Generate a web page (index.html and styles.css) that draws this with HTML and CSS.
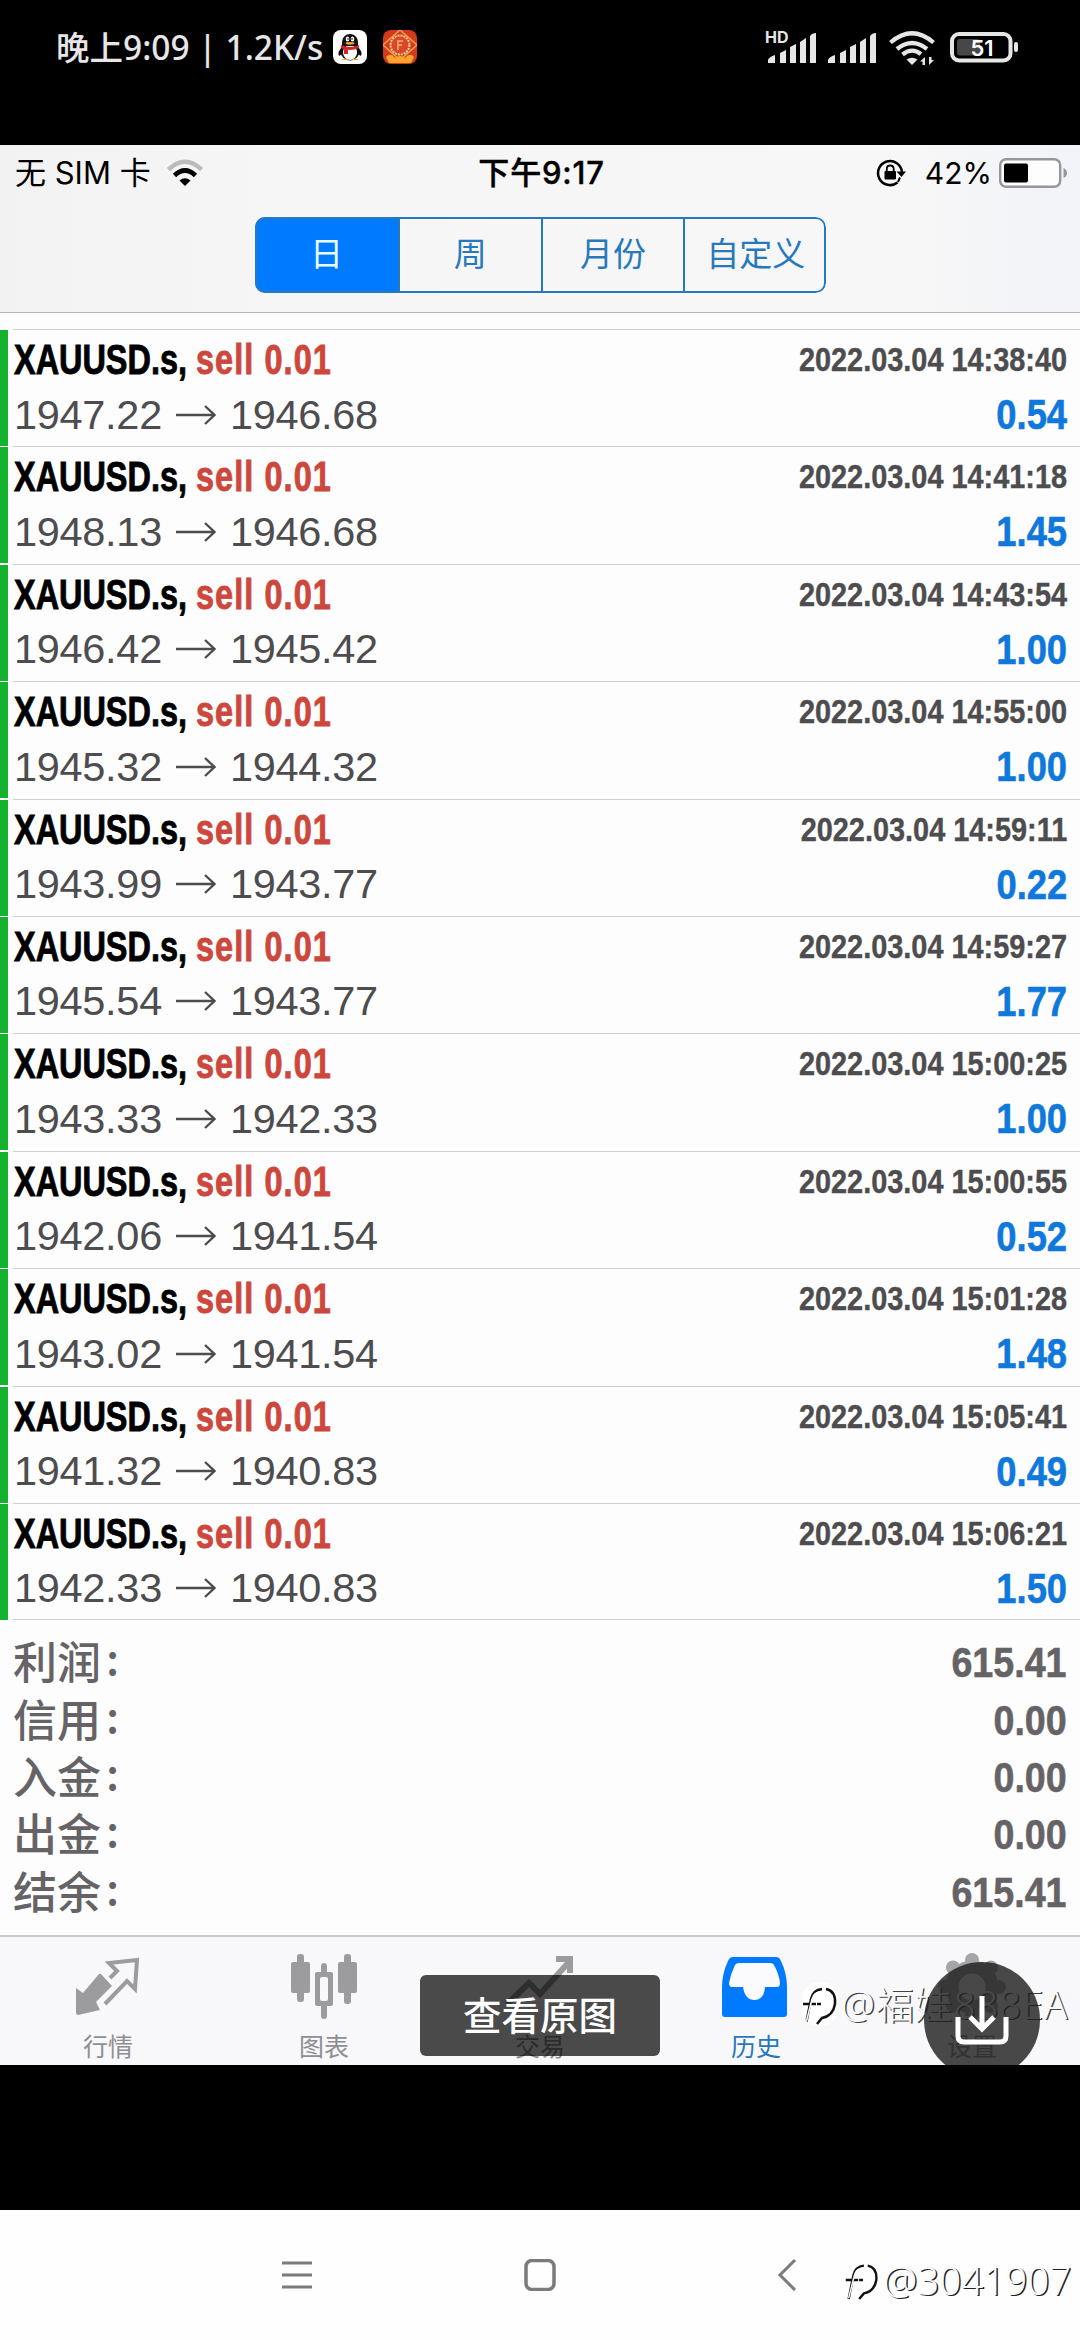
FILE: index.html
```html
<!DOCTYPE html>
<html lang="zh-CN">
<head>
<meta charset="utf-8">
<title>历史</title>
<link rel="stylesheet" href="styles.css">
</head>
<body>
<div class="android-bar">
  <div class="android-left">
    <span class="android-time">晚上9:09 | 1.2K/s</span>
    <svg class="qq" width="34" height="34" viewBox="0 0 34 34">
      <rect width="34" height="34" rx="8" fill="#fff"/>
      <path d="M9 17Q4 22 6 26Q8 25 10 22zM25 17Q30 22 28 26Q26 25 24 22z" fill="#111"/>
      <ellipse cx="17" cy="21" rx="9.5" ry="9.5" fill="#111"/>
      <ellipse cx="17" cy="22.5" rx="7" ry="7.5" fill="#fff"/>
      <path d="M9 13C9 1 25 1 25 13V16H9z" fill="#111"/>
      <ellipse cx="14.5" cy="9" rx="1.8" ry="2.5" fill="#fff"/><ellipse cx="19.5" cy="9" rx="1.8" ry="2.5" fill="#fff"/>
      <circle cx="15" cy="9" r=".8"/><circle cx="19" cy="9" r=".8"/>
      <ellipse cx="17" cy="13.3" rx="4.5" ry="1.4" fill="#f5a623"/>
      <path d="M8 15Q17 19 26 15V18Q17 22 8 18zM11 19L15 20V24H11z" fill="#d8232a"/>
      <path d="M8 30Q12 27 16 30zM18 30Q22 27 26 30z" fill="#f5a623"/>
    </svg>
    <svg class="mahjong" width="34" height="34" viewBox="0 0 34 34">
      <rect width="34" height="34" rx="8" fill="#d43a1c"/>
      <path d="M17 0L34 15L17 30L0 15z" fill="none" stroke="#f3a04c" stroke-width="1.5"/>
      <path d="M3 27Q8 22 12 28Q17 24 22 28Q27 22 31 27L28 33H6z" fill="#f7a52b"/>
      <circle cx="17" cy="15" r="9.5" fill="#d9482a" stroke="#ffd79a" stroke-width="2" stroke-dasharray="2 1"/>
      <path d="M15 20V11H20M15 15H19" fill="none" stroke="#f3b25e" stroke-width="1.5"/>
    </svg>
  </div>
  <svg class="android-icons" width="256" height="40" viewBox="764 28 256 40">
    <text x="764" y="43" class="hd">HD</text>
    <g fill="#e6e6e6">
      <path id="b" d="M767 63V60Q768 57 774 55V63zM779 53L785 50V63H779zM789 47L795 44V63H789zM799 42L805 38V63H799zM809 36Q811 33 815 33V63H809z"/>
      <use href="#b" x="60"/>
      <path d="M911 65L905.500 59.500Q911 56 916.500 59.500z"/>
      <path d="M919 61.500L924 57V65H921.500V61.500zM933 60L928 65V57H930.500V60z"/>
    </g>
    <g fill="none" stroke="#e6e6e6" stroke-width="4.200">
      <path d="M889.500 42.500Q911 24 932.500 42.500M896 49Q911 37 926 49M901.500 54.500Q911 47 920 54"/>
    </g>
    <rect x="951" y="34" width="58.500" height="26.500" rx="7" fill="none" stroke="#e6e6e6" stroke-width="4"/>
    <rect x="956" y="39" width="23" height="16.500" rx="3" fill="#474747"/>
    <rect x="1013" y="42" width="4" height="10" rx="2" fill="#e6e6e6"/>
    <text x="981" y="56" text-anchor="middle" class="pct">51</text>
  </svg>
</div>

<header class="header">
  <div class="ios-bar">
    <div class="ios-left">
      <span>无 SIM 卡</span>
      <svg width="36" height="28" viewBox="0 0 36 28">
        <path d="M1.500 10.500Q18-5 34.500 10.500" fill="none" stroke="#bcbcbc" stroke-width="4.500"/>
        <path d="M7.500 16.500Q18 6.500 28.500 16.500" fill="none" stroke="#000" stroke-width="4.800"/>
        <path d="M18 27L12.500 21.500Q18 17 23.500 21.500z"/>
      </svg>
    </div>
    <div class="ios-time">下午9:17</div>
    <div class="ios-right">
      <svg width="30" height="28" viewBox="0 0 30 28">
        <path d="M26 13A12 12 0 1 0 21.500 23.500" fill="none" stroke="#000" stroke-width="2.500"/>
        <path d="M20.500 12.500H30L25.500 18z"/>
        <path d="M24 18.500L22 23" stroke="#000" stroke-width="2"/>
        <rect x="8.500" y="12" width="11.500" height="8.500" rx="1"/>
        <path d="M10.800 13V10Q10.800 6.500 14.200 6.500T17.700 10V13" fill="none" stroke="#000" stroke-width="1.800"/>
      </svg>
      <span class="ios-pct">42%</span>
      <svg width="69" height="30" viewBox="0 0 69 30">
        <rect x="1.200" y="1.200" width="60" height="27.600" rx="6" fill="#fdfdfe" stroke="#96969b" stroke-width="2.400"/>
        <rect x="5" y="5.500" width="24" height="19" rx="2"/>
        <path d="M64.500 10Q68 11.500 68 15T64.500 20z" fill="#96969b"/>
      </svg>
    </div>
  </div>
  <nav class="segments">
    <span class="segment on">日</span><span class="segment">周</span><span class="segment">月份</span><span class="segment">自定义</span>
  </nav>
</header>

<main class="history">
  <div class="deals" id="deals"></div>
  <div class="summary">
    <div class="total"><span class="label">利润<i>:</i></span><b>615.41</b></div>
    <div class="total"><span class="label">信用<i>:</i></span><b>0.00</b></div>
    <div class="total"><span class="label">入金<i>:</i></span><b>0.00</b></div>
    <div class="total"><span class="label">出金<i>:</i></span><b>0.00</b></div>
    <div class="total"><span class="label">结余<i>:</i></span><b>615.41</b></div>
  </div>
</main>

<footer class="tabs">
  <div class="tab">
    <svg width="76" height="76" viewBox="0 0 76 76">
      <path d="M6 33L13 38L29 19L31 19L42 31L26 47L30 55L8 60Q6 60 6 57z" fill="#9c9b9e"/>
      <path d="M40 23L47 16L39 8L67 5L65 34L57 26L35 49" fill="none" stroke="#9c9b9e" stroke-width="4"/>
    </svg>
    <span>行情</span>
  </div>
  <div class="tab">
    <svg width="76" height="76" viewBox="0 0 76 76">
      <g fill="#9c9b9e">
        <rect x="5" y="7" width="19" height="31" rx="2"/><rect x="11" y="-1" width="7" height="48" rx="3"/>
        <rect x="52" y="7" width="19" height="31" rx="2"/><rect x="58" y="-1" width="7" height="50" rx="3"/>
        <rect x="29" y="17" width="18" height="34" rx="2"/><rect x="35" y="8" width="6" height="56" rx="3"/>
      </g>
      <rect x="34" y="22" width="8" height="24" rx="2" fill="#f8f7f9"/>
    </svg>
    <span>图表</span>
  </div>
  <div class="tab">
    <svg width="76" height="76" viewBox="0 0 76 76">
      <path d="M5 49L27 28L38 39L67 7M54 4H68V18" fill="none" stroke="#9c9b9e" stroke-width="6"/>
    </svg>
    <span>交易</span>
  </div>
  <div class="tab active">
    <svg width="76" height="76" viewBox="0 0 76 76">
      <path d="M18 2H58Q61 2 62.500 5Q69 18 69 33V59Q69 62 66 62H7Q4 62 4 59V33Q4 18 10.500 5Q12 2 15 2z" fill="#007aff"/>
      <path d="M21 8H52Q55 8 56 10Q61 19 62 28Q62 32 59 32H47Q46 45 36.500 45T25 32H14Q11 32 11 28Q13 18 17 10Q18 8 21 8z" fill="#fbfafc"/>
    </svg>
    <span>历史</span>
  </div>
  <div class="tab">
    <svg width="76" height="76" viewBox="0 0 76 76">
      <circle cx="38" cy="32" r="20" fill="none" stroke="#a5a4a7" stroke-width="13"/>
      <g fill="#a5a4a7"><circle cx="38" cy="5" r="7"/><circle cx="19" cy="12.500" r="7"/><circle cx="57" cy="12.500" r="7"/><circle cx="65" cy="32" r="7"/><circle cx="11" cy="32" r="7"/><circle cx="57" cy="51" r="7"/><circle cx="19" cy="51" r="7"/><circle cx="38" cy="59" r="7"/></g>
    </svg>
    <span>设置</span>
  </div>
  <div class="watermark top"><svg class="badge" width="36" height="44" viewBox="0 0 36 44"><use href="#logo"/></svg><span>@福娃888EA</span></div>
  <div class="toast">查看原图</div>
  <svg class="download" width="116" height="103" viewBox="0 0 116 103">
    <circle cx="58" cy="58" r="58" fill="#1c1c1c" fill-opacity=".8"/>
    <path d="M58 34V66M46 55L58 67L70 55" fill="none" stroke="#fff" stroke-width="5"/>
    <path d="M34 55V74Q34 80 40 80H76Q82 80 82 74V55" fill="none" stroke="#fff" stroke-width="5"/>
  </svg>
</footer>

<div class="gap"></div>
<div class="android-nav">
  <svg width="32" height="30" viewBox="0 0 32 30"><path d="M1 3H31M1 15H31M1 27H31" stroke="#7b7b7b" stroke-width="3"/></svg>
  <svg class="home" width="32" height="32" viewBox="0 0 32 32"><rect x="2" y="1.500" width="28" height="29" rx="6" fill="none" stroke="#7b7b7b" stroke-width="3.500"/></svg>
  <svg class="back" width="20" height="32" viewBox="0 0 20 32"><path d="M18 1L3 16L18 31" fill="none" stroke="#7b7b7b" stroke-width="3"/></svg>
  <div class="watermark bottom"><svg width="36" height="42" viewBox="0 0 36 44">
    <g id="logo" fill="none">
      <path d="M4 42L9 17Q11 8 20 7M1 22H14M24 7Q34 9 33 22Q31 34 20 36L15 42M15 22H19" stroke="#111" stroke-width="2.500"/>
      <path d="M4 41L10 17Q12 10 18 10" stroke="#fff" stroke-width="1.500"/>
    </g>
  </svg><span>@3041907</span></div>
</div>
<script src="deals.js"></script>
</body>
</html>
```
FILE: styles.css
```css
* { box-sizing: border-box; }
body { margin: 0; width: 1080px; height: 2340px; overflow: hidden; background: #000; font-family: Inter, "Noto Sans CJK SC", sans-serif; }
svg { display: block; flex: none; }
.android-bar { height: 145px; padding: 28px 59px 0 56px; display: flex; justify-content: space-between; align-items: flex-start; color: #e6e6e6; }
.android-left { display: flex; align-items: center; height: 38px; }
.android-time { font: 500 33.500px/38px "Noto Sans", "Noto Sans CJK SC", sans-serif; width: 277px; white-space: nowrap; }
.mahjong { margin-left: 16px; }
.hd { font: 700 16px Inter, sans-serif; fill: #e6e6e6; }
.pct { font: 600 22px Inter, sans-serif; fill: #fff; }

.header { height: 168px; background: linear-gradient(90deg, #f2f2f2, #f7f6f6 25%, #f7f7f7 85%, #f1f3f9); border-bottom: 1px solid #b4b4b4; }
.ios-bar { height: 72px; padding: 0 12px 16px 15px; display: grid; grid-template-columns: 1fr auto 1fr; align-items: center; color: #000; font-size: 31px; line-height: 54px; }
.ios-left { display: flex; align-items: center; gap: 16px; }
.ios-time { font-weight: 500; font-size: 31px; letter-spacing: .8px; -webkit-text-stroke: .4px #000; }
.ios-right { display: flex; align-items: center; justify-content: flex-end; }
.ios-pct { margin: 0 7px 0 19px; font-size: 30px; }
.segments { width: 571px; height: 76px; margin-left: 255px; display: grid; grid-template-columns: repeat(4, 1fr); border-radius: 10px; overflow: hidden; position: relative; }
.segments::after { content: ""; position: absolute; inset: 0; border: 2.500px solid #2779bd; border-radius: 10px; }
.segment { display: flex; align-items: center; justify-content: center; color: #2779bd; font-size: 33px; line-height: 70px; padding-bottom: 3px; border-left: 2px solid #2779bd; }
.segment.on { color: #e8fbff; background: #007aff; border-left: 0; }

.history { height: 1622px; background: #fdfdfd; padding-top: 16px; }
.deal { height: 117.400px; padding-left: 13px; background: linear-gradient(#14b22f, #14b22f) 0 1px / 8px 116px no-repeat; }
.deal-body { height: 100%; border-top: 1.500px solid #d0d0d0; padding: 0 13px 0 1px; display: grid; grid-template-columns: 1fr auto; grid-template-rows: 53px 54px; font-family: "Liberation Sans", sans-serif; line-height: 54px; white-space: nowrap; color: #4d4c4f; }
.deal:last-child .deal-body { border-bottom: 1.500px solid #d0d0d0; }
.name { font-weight: 700; font-size: 42px; color: #000; transform: scaleX(.772); transform-origin: 0 50%; padding-top: 3px; -webkit-text-stroke: .9px; }
.name em { font-style: normal; color: #cd473c; letter-spacing: 1.400px; }
.date { font-weight: 700; font-size: 33.500px; transform: scaleX(.862); transform-origin: 100% 50%; padding-top: 3px; -webkit-text-stroke: .4px; }
.prices { font-size: 41.500px; letter-spacing: -.3px; display: flex; align-items: center; padding-top: 9px; }
.prices svg { margin: 0 14px; }
.profit { text-align: right; font-weight: 700; font-size: 42px; color: #0e78dc; transform: scaleX(.865); transform-origin: 100% 50%; padding-top: 5px; -webkit-text-stroke: .6px; }

.summary { padding: 12px 13px 0; color: #656366; }
.total { height: 57.400px; line-height: 57px; display: flex; justify-content: space-between; }
.label { font: 500 44px/57px "Noto Sans CJK SC", sans-serif; }
.label i { font-style: normal; margin-left: 5px; position: relative; top: -4px; }
.total b { font: 700 43px/61px "Liberation Sans", sans-serif; transform: scaleX(.875); transform-origin: 100% 50%; -webkit-text-stroke: .6px; }

.tabs { position: relative; height: 130px; background: #f8f7f9; border-top: 2px solid #c9c8ca; display: grid; grid-template-columns: repeat(5, 216px); overflow: hidden; }
.tab { display: flex; flex-direction: column; align-items: center; padding-top: 18px; color: #8f8e91; font-size: 25px; line-height: 32px; }
.tab svg { overflow: visible; }
.tab.active { color: #2779bd; }
.toast { position: absolute; left: 420px; top: 38px; width: 240px; height: 81px; border-radius: 6px; background: rgba(0,0,0,.7); color: #fff; font: 500 38.500px/77px "Noto Sans CJK SC", sans-serif; text-align: center; }
.download { position: absolute; left: 924px; top: 25px; }
.watermark { position: absolute; display: flex; align-items: center; gap: 3px; white-space: nowrap; font-family: "Noto Sans", "Noto Sans CJK SC", sans-serif; color: #fafafa; font-weight: 300; text-shadow: 1.500px 1px 0 #444; }
.watermark.top { left: 802px; top: 42px; font-size: 38px; line-height: 50px; letter-spacing: 1px; }
.badge { border-radius: 16px; background: #fff; }
.gap { height: 145px; }
.android-nav { height: 130px; background: #fefefe; position: relative; display: flex; align-items: center; padding-left: 281px; }
.home { margin-left: 211px; }
.back { margin-left: 221px; }
.watermark.bottom { left: 844px; top: 45px; font-size: 38.500px; line-height: 50px; text-shadow: 1.500px 1px 0 #222; }
```
FILE: deals.js
```js
const deals = [
  ["14:38:40", "1947.22", "1946.68", "0.54"],
  ["14:41:18", "1948.13", "1946.68", "1.45"],
  ["14:43:54", "1946.42", "1945.42", "1.00"],
  ["14:55:00", "1945.32", "1944.32", "1.00"],
  ["14:59:11", "1943.99", "1943.77", "0.22"],
  ["14:59:27", "1945.54", "1943.77", "1.77"],
  ["15:00:25", "1943.33", "1942.33", "1.00"],
  ["15:00:55", "1942.06", "1941.54", "0.52"],
  ["15:01:28", "1943.02", "1941.54", "1.48"],
  ["15:05:41", "1941.32", "1940.83", "0.49"],
  ["15:06:21", "1942.33", "1940.83", "1.50"],
];
document.getElementById("deals").innerHTML = deals.map(([time, open, close, profit]) => `
  <div class="deal"><div class="deal-body">
    <div class="name">XAUUSD.s, <em>sell 0.01</em></div>
    <div class="date">2022.03.04 ${time}</div>
    <div class="prices"><span>${open}</span><svg width="40" height="22" viewBox="0 0 40 22"><path d="M0 11H38M29 2L38.500 11L29 20" fill="none" stroke="#4d4c4f" stroke-width="2.400"/></svg><span>${close}</span></div>
    <div class="profit">${profit}</div>
  </div></div>`).join("");
```
